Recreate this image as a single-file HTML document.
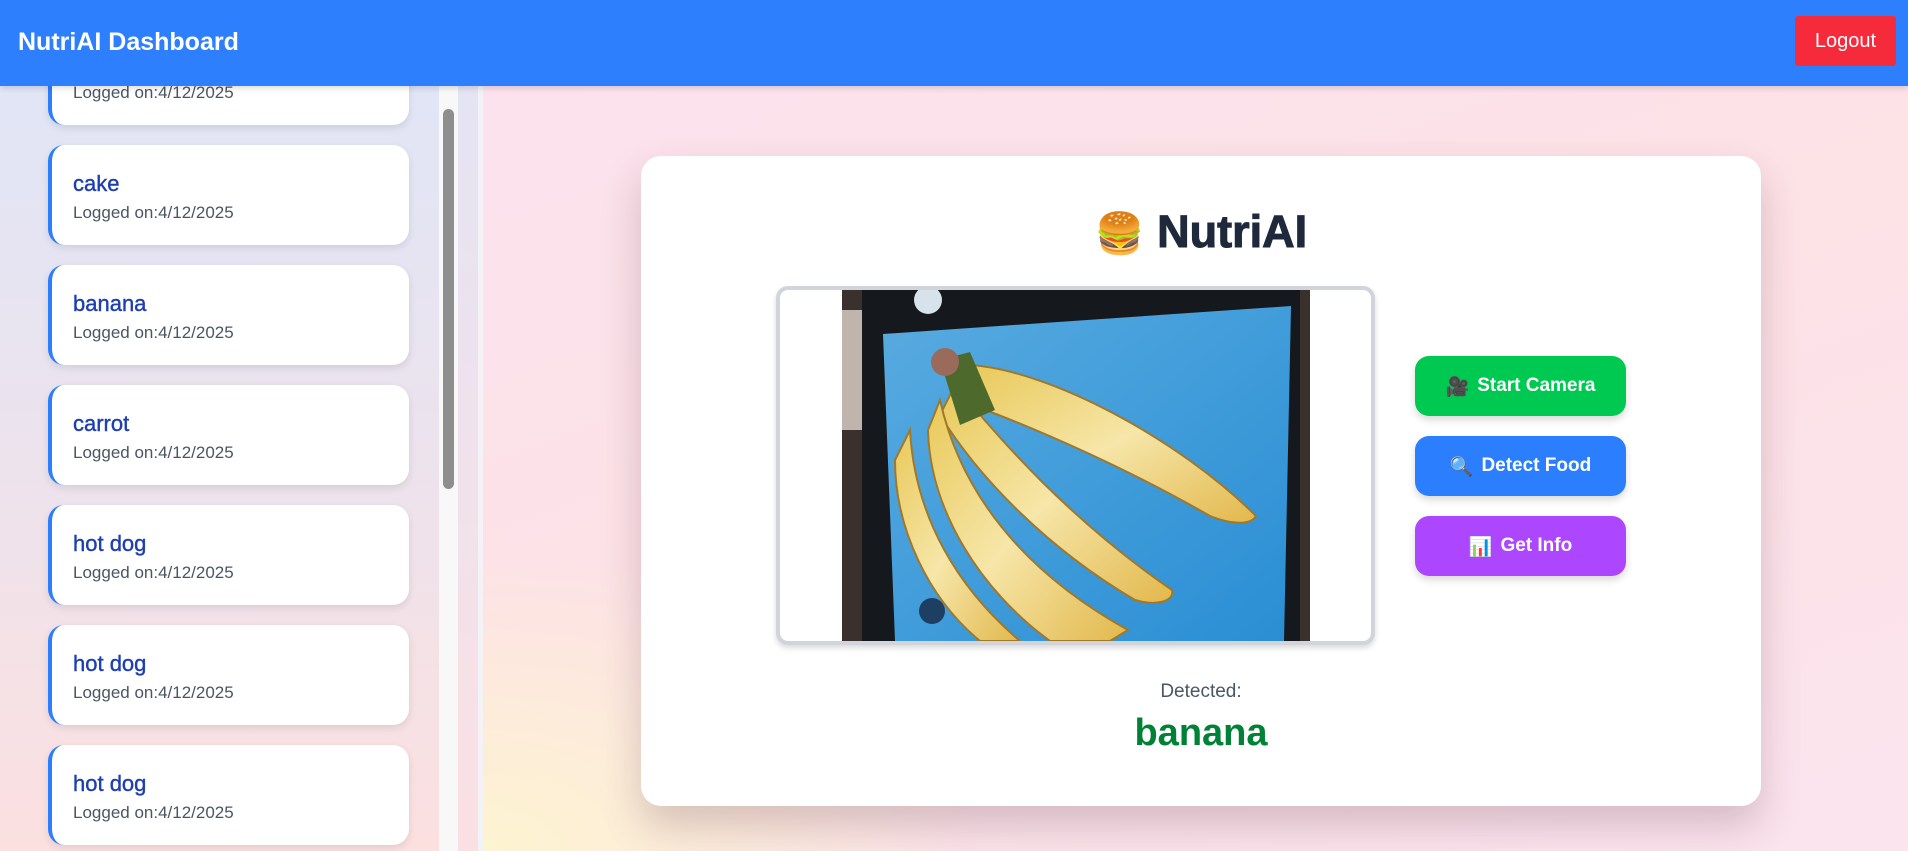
<!DOCTYPE html>
<html><head><meta charset="utf-8"><style>
*{box-sizing:border-box;margin:0;padding:0}
body{width:1908px;height:851px;overflow:hidden;font-family:"Liberation Sans",sans-serif;background:linear-gradient(135deg,#fbe3ef 0%,#fce4ea 50%,#fdf0e0 100%);position:relative}
.hdr{position:absolute;left:0;top:0;width:1908px;height:86px;background:#2e7ffe;z-index:5;box-shadow:0 2px 6px rgba(0,0,0,.15)}
.hdr h1{position:absolute;left:18px;top:28px;font-size:25px;font-weight:bold;color:#fff}
.logout{position:absolute;left:1795px;top:16px;width:101px;height:50px;background:#f52a3a;color:#fff;font-size:20px;display:flex;align-items:center;justify-content:center;border-radius:3px}
.side{position:absolute;left:0;top:0;width:439px;height:851px;background:linear-gradient(180deg,#dfe6f8 0%,#ebe3ee 50%,#fce0e0 100%);overflow:hidden}
.track{position:absolute;left:439px;top:86px;width:19px;height:765px;background:#f8f8f8}
.thumb{position:absolute;left:443px;top:109px;width:11px;height:380px;background:#8e8e8e;border-radius:6px}
.strip{position:absolute;left:458px;top:0;width:20px;height:851px;background:linear-gradient(180deg,#e2e4f5,#fbe0e3)}
.strip2{position:absolute;left:478px;top:0;width:5px;height:851px;background:#f3f3f7}
.main{position:absolute;left:483px;top:0;width:1425px;height:851px;background:linear-gradient(160deg,#fbe2ee 0%,#fde2e6 50%,#fbe4ee 100%)}
.main:before{content:"";position:absolute;left:0;bottom:0;width:500px;height:300px;background:radial-gradient(ellipse at 0 100%,#fdf4d0,rgba(253,244,208,0) 70%)}
.card{position:absolute;left:48px;width:361px;height:100px;background:#fff;border-radius:16px;border-left:4px solid #2b7fff;box-shadow:0 3px 8px rgba(0,0,0,.1)}
.card b{position:absolute;left:21px;top:26px;font-size:22px;font-weight:normal;color:#1e3faf;-webkit-text-stroke:.4px #1e3faf}
.card span{position:absolute;left:21px;top:58px;font-size:17px;color:#4b5563}
.panel{position:absolute;left:641px;top:156px;width:1120px;height:650px;background:#fff;border-radius:20px;box-shadow:0 20px 40px rgba(80,40,60,.22)}
.ttl{position:absolute;left:0;width:1120px;top:50px;text-align:center;font-size:45px;font-weight:900;color:#1e293b;-webkit-text-stroke:1px #1e293b}
.vid{position:absolute;left:135px;top:130px;width:599px;height:359px;border:4px solid #d1d5db;border-radius:12px;overflow:hidden;background:#fff;box-shadow:0 3px 6px rgba(0,0,0,.15)}
.btn{position:absolute;left:774px;width:211px;height:60px;border-radius:14px;color:#fff;font-size:19px;font-weight:bold;display:flex;align-items:center;justify-content:center;box-shadow:0 4px 8px rgba(0,0,0,.15)}
.det{position:absolute;left:0;width:1120px;top:525px;text-align:center;font-size:19px;color:#4b5563}
.res{position:absolute;left:0;width:1120px;top:556px;text-align:center;font-size:38px;font-weight:bold;color:#008236}
</style></head><body>
<div class="main"></div>
<div class="side">
<div class="card" style="top:25px"><b>pizza</b><span>Logged on:4/12/2025</span></div>
<div class="card" style="top:145px"><b>cake</b><span>Logged on:4/12/2025</span></div>
<div class="card" style="top:265px"><b>banana</b><span>Logged on:4/12/2025</span></div>
<div class="card" style="top:385px"><b>carrot</b><span>Logged on:4/12/2025</span></div>
<div class="card" style="top:505px"><b>hot dog</b><span>Logged on:4/12/2025</span></div>
<div class="card" style="top:625px"><b>hot dog</b><span>Logged on:4/12/2025</span></div>
<div class="card" style="top:745px"><b>hot dog</b><span>Logged on:4/12/2025</span></div>
</div>
<div class="track"></div><div class="thumb"></div>
<div class="strip"></div><div class="strip2"></div>
<div class="hdr"><h1>NutriAI Dashboard</h1><div class="logout">Logout</div></div>
<div class="panel">
<div class="ttl"><span style="font-family:'Noto Color Emoji',sans-serif;font-size:40px;-webkit-text-stroke:0">🍔</span> NutriAI</div>
<div class="vid">
<svg width="591" height="351" style="position:absolute;left:0;top:0">
<defs><linearGradient id="sc" x1="0" y1="0" x2="1" y2="1"><stop offset="0" stop-color="#58abe0"/><stop offset="1" stop-color="#2a8ed4"/></linearGradient>
<linearGradient id="bn" x1="0" y1="0" x2="1" y2="1"><stop offset="0" stop-color="#e9c95a"/><stop offset=".5" stop-color="#f6e6a8"/><stop offset="1" stop-color="#e2b84c"/></linearGradient></defs>
<rect x="62" y="0" width="468" height="351" fill="#3a302c"/>
<rect x="62" y="20" width="20" height="120" fill="#bfb5ad"/>
<rect x="82" y="0" width="438" height="351" fill="#15191e"/>
<polygon points="103,44 511,16 504,351 115,351" fill="url(#sc)"/>
<g fill="url(#bn)" stroke="#a0782a" stroke-width="2">
<path d="M190,75 C270,80 400,150 476,226 C470,236 450,234 430,226 C350,180 260,140 200,118Z"/>
<path d="M175,95 C220,150 290,230 392,300 C395,312 375,316 355,310 C270,260 200,190 160,125Z"/>
<path d="M160,110 C180,200 240,280 348,340 L330,351 L270,351 C200,300 150,220 148,140Z"/>
<path d="M130,140 C135,230 180,300 240,351 L200,351 C150,310 115,240 115,170Z"/>
</g>
<path d="M160,70 L190,62 L215,120 L180,135Z" fill="#4d6a2c"/>
<circle cx="165" cy="72" r="14" fill="#9a6b5a"/>
<circle cx="152" cy="321" r="13" fill="#1c3f62"/>
<circle cx="148" cy="10" r="14" fill="#d8e2ea"/>
</svg>
</div>
<div class="btn" style="top:200px;background:#00c951"><span style="font-family:'Noto Color Emoji',sans-serif;margin-right:8px">🎥</span>Start Camera</div>
<div class="btn" style="top:280px;background:#2b7fff"><span style="font-family:'Noto Color Emoji',sans-serif;margin-right:8px">🔍</span>Detect Food</div>
<div class="btn" style="top:360px;background:#ad46ff"><span style="font-family:'Noto Color Emoji',sans-serif;margin-right:8px">📊</span>Get Info</div>
<div class="det">Detected:</div>
<div class="res">banana</div>
</div>
</body></html>
